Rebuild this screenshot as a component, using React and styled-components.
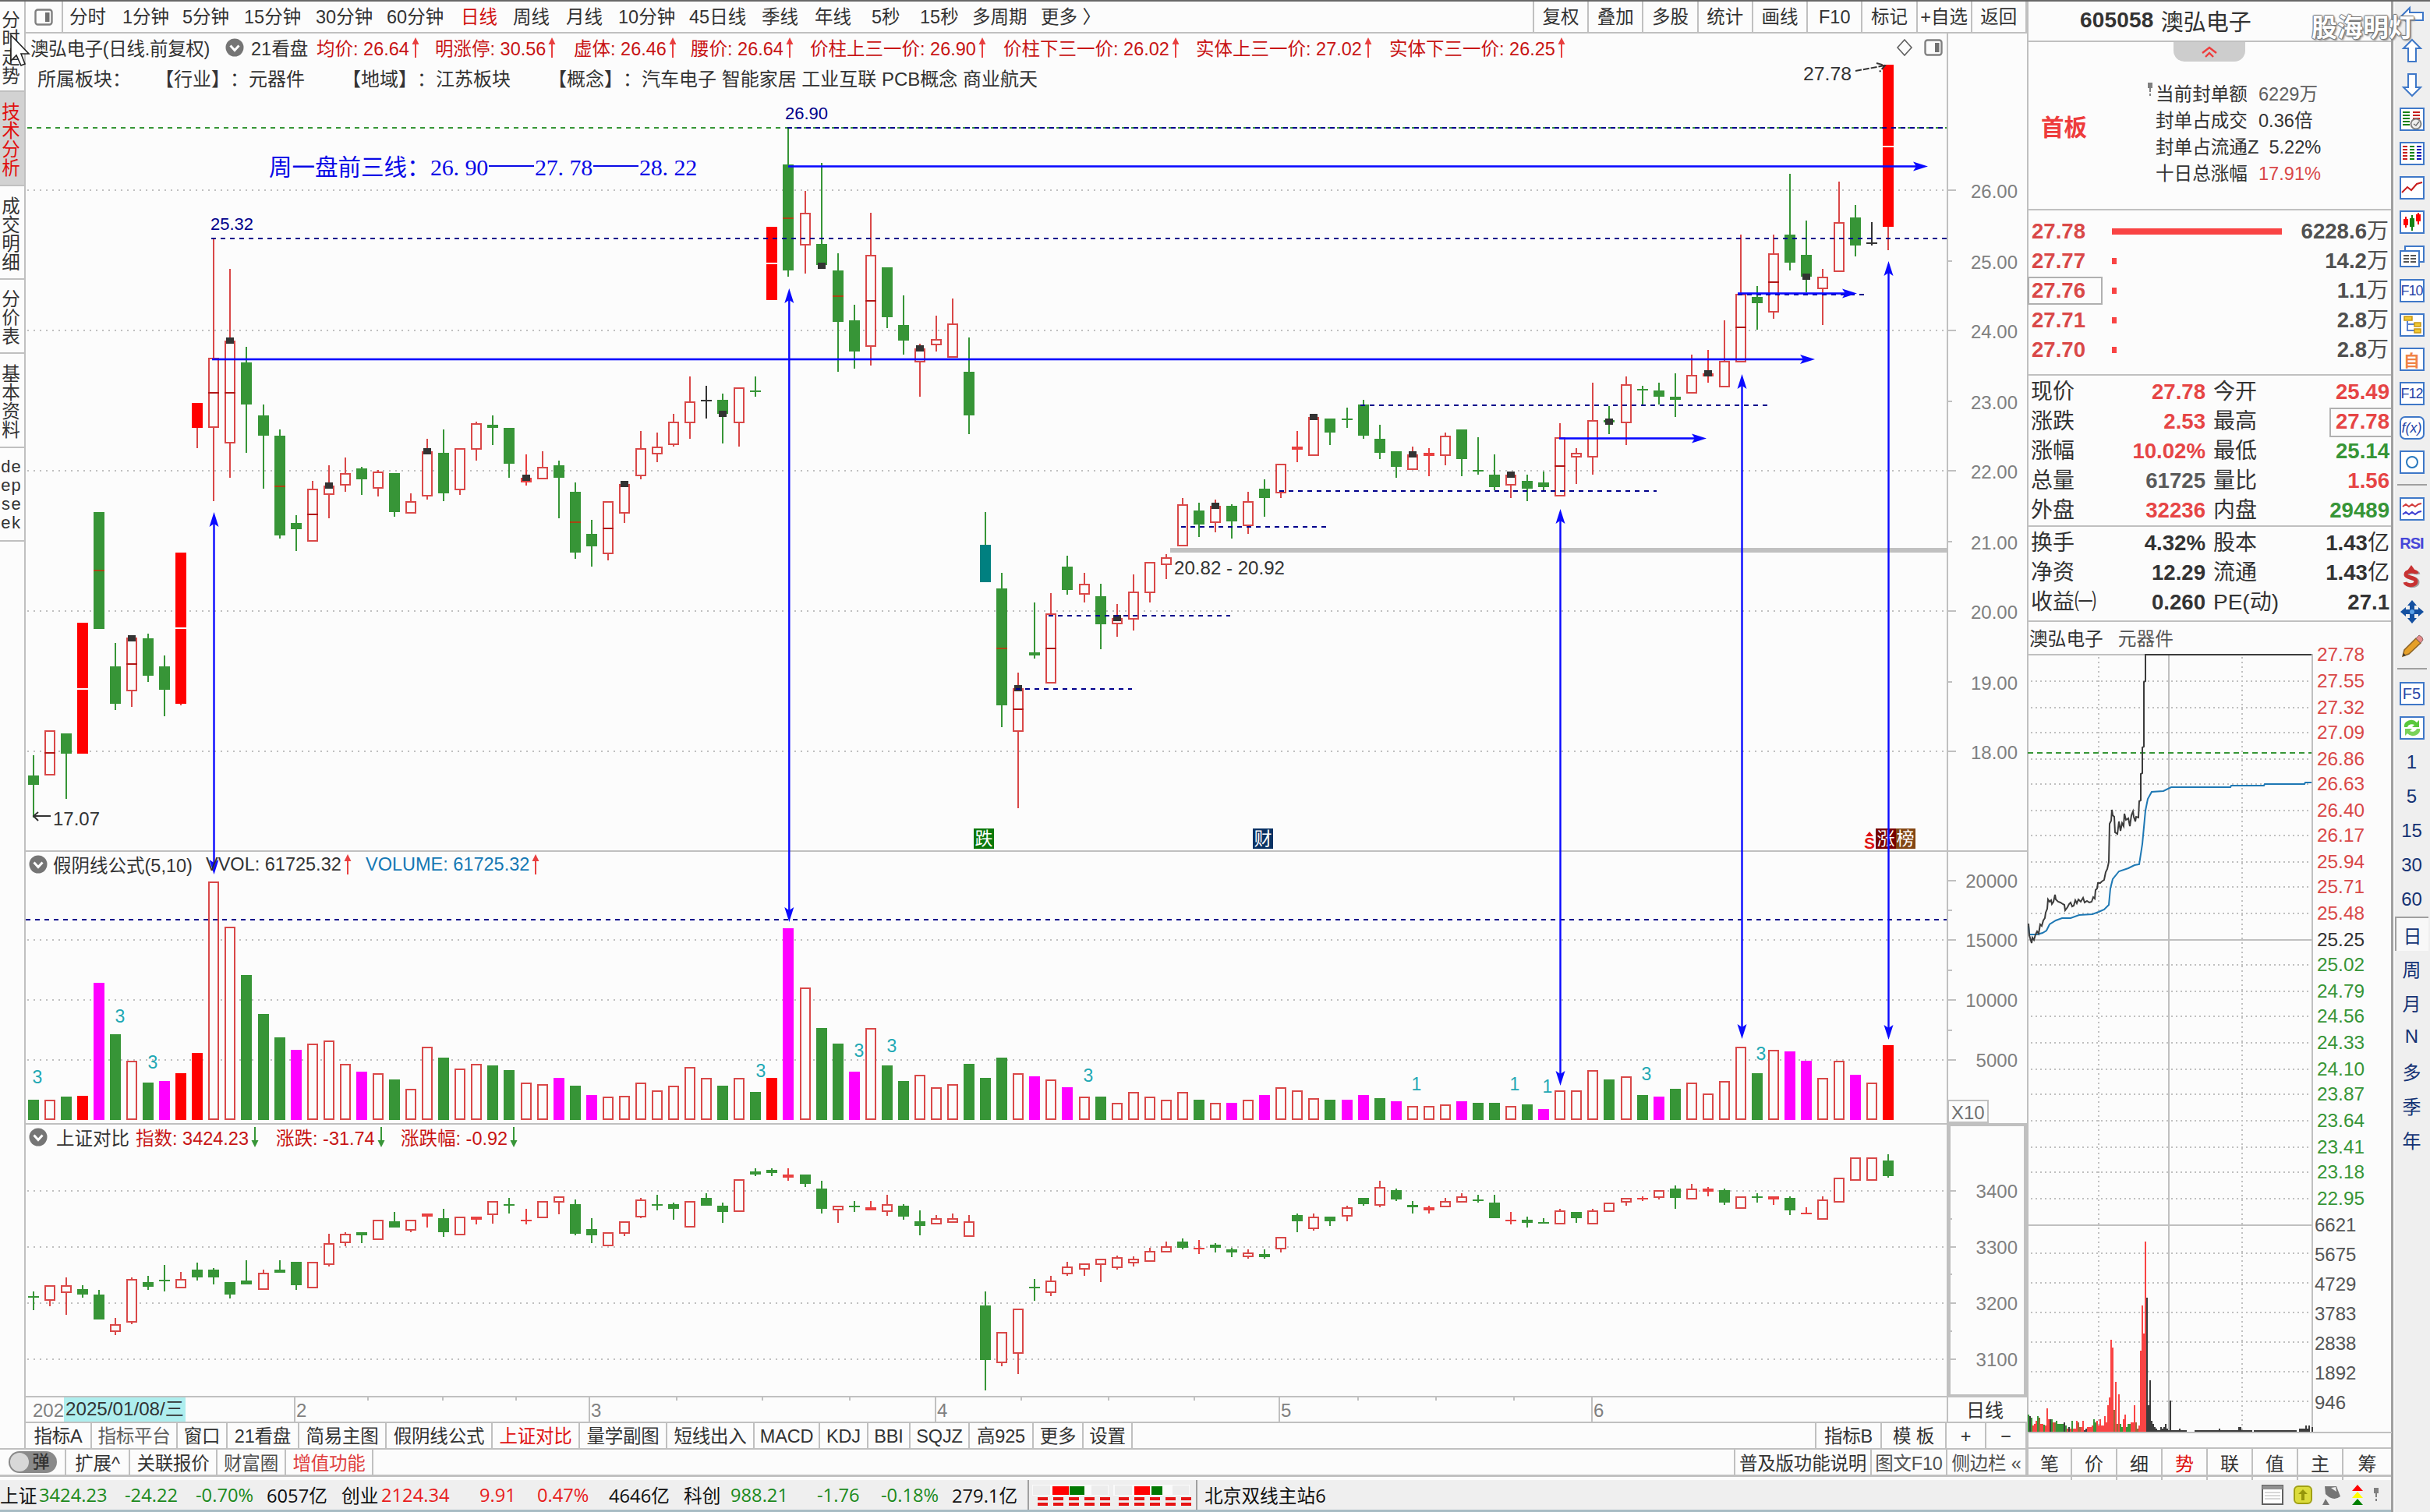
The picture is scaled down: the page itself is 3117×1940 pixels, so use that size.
import React from 'react'

import styled, { createGlobalStyle, css } from 'styled-components'

const INK = `#333333`
const LINE = `#c0c0c0`
const PAPER = `#fcfcfc`
const RED = `#d94848`
const DEEP_RED = `#c81414`
const GREEN = `#379537`
const NAVY = `#00008b`
const BLUE = `#0a0aff`
const FONT = `"Liberation Sans", "Noto Sans CJK SC", sans-serif`

const GlobalStyle = createGlobalStyle`
  * {
    box-sizing: border-box;
  }
  body {
    margin: 0;
    background: ${PAPER};
    color: ${INK};
    font-family: ${FONT};
    font-size: 24px;
    text-spacing-trim: space-all;
  }
`

/* ---------- data ---------- */

const periods = [
  [`分时`, 68],
  [`1分钟`, 77],
  [`5分钟`, 79],
  [`15分钟`, 92],
  [`30分钟`, 91],
  [`60分钟`, 95],
  [`日线`, 67],
  [`周线`, 68],
  [`月线`, 67],
  [`10分钟`, 91],
  [`45日线`, 93],
  [`季线`, 68],
  [`年线`, 73],
  [`5秒`, 62],
  [`15秒`, 67],
  [`多周期`, 88],
  [`更多 〉`, 80],
]

const actions = [`复权`, `叠加`, `多股`, `统计`, `画线`, `F10`, `标记`, `+自选`, `返回`]

const averages = [
  [`均价: 26.64`, 152],
  [`明涨停: 30.56`, 178],
  [`虚体: 26.46`, 150],
  [`腰价: 26.64`, 153],
  [`价柱上三一价: 26.90`, 248],
  [`价柱下三一价: 26.02`, 247],
  [`实体上三一价: 27.02`, 248],
  [`实体下三一价: 26.25`, 240],
]

// kind, high, top, bottom, low, marker top, half line
// r hollow red, R solid red, f thin red, g green, k doji, t teal
const days = [
  [`g`, 969, 995, 1007, 1049],
  [`r`, 937, 937, 995, 995, 0, 966],
  [`g`, 941, 941, 967, 1025],
  [`R`, 799, 799, 967, 967, 0, 884],
  [`g`, 657, 657, 807, 807, 0, 732],
  [`g`, 825, 855, 903, 911],
  [`r`, 815, 818, 887, 907, 815, 852],
  [`g`, 813, 819, 867, 875],
  [`g`, 841, 855, 885, 919],
  [`R`, 709, 709, 903, 905, 0, 806],
  [`R`, 517, 517, 549, 575],
  [`r`, 306, 459, 549, 643, 0, 504],
  [`r`, 345, 437, 569, 613, 433, 504],
  [`g`, 445, 465, 519, 581],
  [`g`, 519, 533, 559, 627],
  [`g`, 551, 559, 687, 691, 0, 624],
  [`g`, 661, 671, 679, 707],
  [`r`, 617, 627, 695, 695, 0, 660],
  [`r`, 597, 623, 635, 665, 619],
  [`r`, 587, 607, 623, 631],
  [`g`, 599, 601, 615, 635],
  [`r`, 603, 605, 627, 637],
  [`g`, 607, 607, 657, 663],
  [`r`, 633, 643, 659, 659],
  [`r`, 563, 579, 637, 641, 575],
  [`g`, 551, 581, 633, 643],
  [`r`, 575, 575, 629, 635],
  [`r`, 541, 543, 577, 591],
  [`g`, 533, 545, 549, 571],
  [`g`, 549, 549, 595, 613],
  [`f`, 583, 613, 619, 623, 609],
  [`r`, 579, 599, 615, 615],
  [`g`, 591, 597, 613, 665],
  [`g`, 619, 631, 709, 717, 0, 670],
  [`g`, 667, 685, 701, 727],
  [`r`, 643, 643, 711, 719, 0, 678],
  [`r`, 621, 621, 659, 671, 617],
  [`r`, 553, 575, 611, 615],
  [`r`, 555, 573, 583, 593],
  [`r`, 531, 541, 571, 573],
  [`r`, 483, 515, 543, 563],
  [`k`, 495, 513, 515, 537],
  [`g`, 505, 513, 531, 569, 527],
  [`r`, 497, 497, 543, 573],
  [`g`, 483, 501, 503, 509],
  [`R`, 291, 291, 385, 385, 0, 338],
  [`g`, 164, 211, 347, 355, 0, 280],
  [`r`, 245, 273, 315, 351],
  [`g`, 209, 313, 340, 345, 337],
  [`g`, 325, 347, 413, 477, 0, 380],
  [`g`, 391, 411, 451, 473],
  [`r`, 273, 327, 445, 469, 0, 386],
  [`g`, 343, 343, 407, 421],
  [`g`, 379, 417, 437, 455],
  [`r`, 441, 447, 465, 509, 443],
  [`r`, 405, 435, 443, 451],
  [`r`, 383, 415, 459, 459],
  [`g`, 433, 477, 533, 557],
  [`t`, 657, 699, 747, 747],
  [`g`, 735, 755, 905, 933, 0, 832],
  [`r`, 863, 883, 939, 1037, 879, 910],
  [`g`, 773, 837, 841, 845],
  [`r`, 761, 787, 877, 877, 0, 832],
  [`g`, 713, 727, 757, 763],
  [`r`, 735, 749, 763, 773],
  [`g`, 749, 765, 801, 833],
  [`r`, 775, 793, 801, 817, 789],
  [`r`, 737, 759, 795, 809],
  [`r`, 721, 721, 761, 773],
  [`r`, 711, 715, 725, 743],
  [`r`, 639, 647, 701, 701],
  [`g`, 645, 655, 673, 689],
  [`r`, 641, 649, 671, 683, 645],
  [`g`, 647, 649, 669, 691],
  [`r`, 631, 643, 675, 685],
  [`g`, 615, 627, 639, 663],
  [`r`, 595, 595, 633, 639],
  [`f`, 553, 573, 577, 593],
  [`r`, 533, 535, 585, 585, 531],
  [`g`, 537, 537, 555, 571],
  [`g`, 523, 537, 539, 549],
  [`g`, 513, 519, 559, 563],
  [`g`, 545, 563, 581, 589],
  [`g`, 579, 579, 599, 613],
  [`r`, 573, 583, 603, 603, 579],
  [`f`, 575, 581, 585, 611],
  [`r`, 555, 559, 585, 597],
  [`g`, 551, 551, 589, 611],
  [`g`, 561, 603, 605, 609],
  [`g`, 583, 609, 625, 629],
  [`r`, 605, 609, 623, 639, 605],
  [`g`, 609, 617, 627, 643],
  [`g`, 605, 619, 625, 629],
  [`r`, 543, 561, 637, 637, 0, 598],
  [`r`, 575, 581, 587, 621],
  [`r`, 491, 539, 587, 609],
  [`g`, 521, 539, 542, 557, 537],
  [`r`, 483, 493, 543, 571],
  [`g`, 495, 499, 501, 519],
  [`g`, 491, 501, 509, 519],
  [`g`, 479, 509, 513, 535],
  [`r`, 455, 481, 505, 505],
  [`f`, 449, 479, 483, 491, 475],
  [`r`, 411, 463, 497, 497],
  [`r`, 301, 377, 465, 465, 0, 420],
  [`g`, 367, 381, 389, 423],
  [`r`, 301, 325, 401, 409, 0, 362],
  [`g`, 223, 301, 337, 347],
  [`g`, 283, 327, 355, 375, 351],
  [`r`, 345, 355, 371, 417],
  [`r`, 233, 285, 349, 349],
  [`g`, 263, 279, 315, 329],
  [`k`, 285, 311, 313, 315],
  [`R`, 83, 83, 291, 321, 0, 188],
]

// top edge of every volume column
const volumes = `g1411 r1411 g1407 R1406 m1261 g1327 r1361 g1389 m1387 R1377 R1351 r1131 r1189 g1251 g1301 g1331 m1347 r1339 r1335 r1365
m1375 r1377 g1385 r1397 r1343 g1357 r1371 r1365 g1367 g1373 r1389 r1391 m1383 g1393 m1405 r1407 r1406 r1389 r1399 r1393
r1369 r1383 g1393 r1383 g1401 R1383 m1191 r1267 g1319 g1339 m1375 r1319 g1367 g1387 r1379 r1395 r1391 g1365 g1383 g1357
r1377 m1381 r1385 m1395 r1407 g1407 r1415 r1401 r1407 r1411 r1401 g1411 r1415 m1415 r1411 m1405 r1395 r1399 r1409 g1411
m1411 m1405 g1409 m1413 r1419 r1419 r1417 m1413 g1415 g1415 r1419 g1417 m1423 r1399 r1399 r1373 g1385 r1381 g1405 m1407
g1397 r1389 r1403 r1387 r1343 g1377 r1347 m1349 m1361 r1383 r1361 m1379 r1389 R1341`
  .split(/\s+/)
  .map(v => [v[0], Number(v.slice(1))])

const indexDays = [
  [`g`, 1657, 1663, 1665, 1681],
  [`r`, 1649, 1649, 1669, 1676],
  [`r`, 1639, 1649, 1659, 1687],
  [`g`, 1649, 1654, 1661, 1665],
  [`g`, 1655, 1661, 1693, 1693],
  [`r`, 1691, 1699, 1709, 1713],
  [`r`, 1639, 1641, 1697, 1699],
  [`g`, 1637, 1645, 1651, 1655],
  [`g`, 1623, 1642, 1644, 1657],
  [`r`, 1632, 1641, 1653, 1653],
  [`g`, 1620, 1629, 1639, 1643],
  [`g`, 1627, 1629, 1639, 1648],
  [`g`, 1645, 1645, 1661, 1666],
  [`g`, 1617, 1643, 1648, 1648],
  [`r`, 1629, 1633, 1655, 1655],
  [`g`, 1617, 1629, 1633, 1633],
  [`g`, 1619, 1619, 1649, 1655],
  [`r`, 1619, 1619, 1653, 1653],
  [`r`, 1583, 1595, 1623, 1625],
  [`r`, 1581, 1583, 1595, 1599],
  [`g`, 1581, 1581, 1585, 1595],
  [`r`, 1565, 1565, 1591, 1591],
  [`g`, 1555, 1567, 1575, 1575],
  [`r`, 1565, 1565, 1579, 1581],
  [`f`, 1557, 1557, 1561, 1575],
  [`g`, 1551, 1563, 1581, 1587],
  [`r`, 1561, 1561, 1585, 1585],
  [`f`, 1561, 1561, 1565, 1571],
  [`r`, 1541, 1541, 1559, 1570],
  [`g`, 1537, 1545, 1547, 1557],
  [`f`, 1551, 1565, 1567, 1571],
  [`r`, 1541, 1541, 1563, 1563],
  [`r`, 1535, 1535, 1543, 1558],
  [`g`, 1539, 1545, 1583, 1585],
  [`g`, 1563, 1577, 1585, 1595],
  [`r`, 1581, 1581, 1599, 1599],
  [`r`, 1567, 1567, 1583, 1586],
  [`r`, 1537, 1539, 1562, 1563],
  [`g`, 1533, 1545, 1547, 1553],
  [`g`, 1543, 1545, 1551, 1565],
  [`r`, 1541, 1541, 1575, 1575],
  [`g`, 1531, 1537, 1547, 1547],
  [`g`, 1543, 1547, 1555, 1569],
  [`r`, 1513, 1513, 1555, 1555],
  [`g`, 1499, 1503, 1507, 1509],
  [`g`, 1499, 1501, 1505, 1509],
  [`f`, 1499, 1507, 1511, 1515],
  [`g`, 1507, 1507, 1519, 1523],
  [`g`, 1515, 1525, 1551, 1557],
  [`r`, 1547, 1547, 1553, 1569],
  [`g`, 1541, 1547, 1549, 1555],
  [`f`, 1541, 1549, 1553, 1553],
  [`r`, 1533, 1545, 1555, 1560],
  [`g`, 1545, 1547, 1561, 1565],
  [`g`, 1553, 1567, 1573, 1585],
  [`r`, 1559, 1563, 1571, 1571],
  [`r`, 1557, 1563, 1569, 1569],
  [`r`, 1559, 1567, 1587, 1587],
  [`g`, 1657, 1675, 1745, 1784],
  [`r`, 1709, 1709, 1749, 1753],
  [`r`, 1679, 1679, 1737, 1763],
  [`g`, 1641, 1651, 1653, 1669],
  [`r`, 1637, 1643, 1659, 1663],
  [`r`, 1619, 1625, 1635, 1637],
  [`r`, 1621, 1621, 1629, 1637],
  [`r`, 1615, 1615, 1623, 1645],
  [`r`, 1611, 1613, 1627, 1629],
  [`r`, 1612, 1615, 1621, 1625],
  [`r`, 1601, 1605, 1619, 1619],
  [`r`, 1593, 1599, 1607, 1607],
  [`g`, 1589, 1593, 1601, 1603],
  [`f`, 1591, 1601, 1603, 1609],
  [`g`, 1595, 1597, 1601, 1607],
  [`g`, 1601, 1603, 1607, 1613],
  [`r`, 1603, 1607, 1613, 1615],
  [`g`, 1603, 1609, 1613, 1615],
  [`r`, 1587, 1587, 1603, 1607],
  [`g`, 1557, 1559, 1567, 1581],
  [`r`, 1557, 1561, 1577, 1579],
  [`g`, 1561, 1561, 1567, 1573],
  [`r`, 1547, 1549, 1561, 1567],
  [`g`, 1537, 1537, 1545, 1547],
  [`r`, 1515, 1523, 1547, 1549],
  [`g`, 1525, 1527, 1539, 1541],
  [`g`, 1541, 1546, 1549, 1557],
  [`f`, 1547, 1549, 1553, 1557],
  [`r`, 1537, 1541, 1549, 1549],
  [`r`, 1531, 1535, 1543, 1543],
  [`g`, 1533, 1539, 1541, 1543],
  [`g`, 1533, 1543, 1563, 1563],
  [`f`, 1555, 1565, 1567, 1571],
  [`g`, 1561, 1565, 1569, 1575],
  [`g`, 1563, 1568, 1570, 1570],
  [`r`, 1551, 1553, 1571, 1571],
  [`g`, 1555, 1555, 1563, 1569],
  [`r`, 1551, 1553, 1571, 1571],
  [`r`, 1543, 1543, 1555, 1555],
  [`r`, 1537, 1537, 1543, 1547],
  [`f`, 1535, 1537, 1539, 1541],
  [`r`, 1527, 1527, 1537, 1539],
  [`g`, 1521, 1525, 1537, 1551],
  [`r`, 1519, 1525, 1539, 1539],
  [`f`, 1523, 1525, 1529, 1535],
  [`g`, 1525, 1527, 1543, 1546],
  [`r`, 1535, 1535, 1551, 1551],
  [`g`, 1531, 1535, 1537, 1543],
  [`f`, 1535, 1535, 1539, 1546],
  [`g`, 1535, 1537, 1553, 1559],
  [`f`, 1549, 1556, 1558, 1558],
  [`r`, 1535, 1539, 1565, 1565],
  [`r`, 1511, 1511, 1543, 1543],
  [`r`, 1485, 1485, 1515, 1515],
  [`r`, 1485, 1485, 1515, 1515],
  [`g`, 1481, 1489, 1509, 1511],
]

const volumeNotes = [
  [48, 1382, 3],
  [154, 1304, 3],
  [196, 1363, 3],
  [976, 1374, 3],
  [1102, 1348, 3],
  [1144, 1342, 3],
  [1396, 1380, 3],
  [1817, 1391, 1],
  [1943, 1391, 1],
  [1985, 1394, 1],
  [2112, 1378, 3],
  [2259, 1352, 3],
]

const indicatorTabs = [
  [`指标A`, 85],
  [`指标平台`, 110],
  [`窗口`, 64],
  [`21看盘`, 92],
  [`简易主图`, 112],
  [`假阴线公式`, 136],
  [`上证对比`, 112],
  [`量学副图`, 112],
  [`短线出入`, 112],
  [`MACD`, 84],
  [`KDJ`, 62],
  [`BBI`, 54],
  [`SQJZ`, 76],
  [`高925`, 82],
  [`更多`, 64],
  [`设置`, 63],
]

const quotes = [
  [`现价`, `27.78`, `up`, `今开`, `25.49`, `up`],
  [`涨跌`, `2.53`, `up`, `最高`, `27.78`, `up`, true],
  [`涨幅`, `10.02%`, `up`, `最低`, `25.14`, `down`],
  [`总量`, `61725`, `soft`, `量比`, `1.56`, `up`],
  [`外盘`, `32236`, `up`, `内盘`, `29489`, `down`],
]

const facts = [
  [`换手`, `4.32%`, ``, `股本`, `1.43`, ``, false, `亿`],
  [`净资`, `12.29`, ``, `流通`, `1.43`, ``, false, `亿`],
  [`收益㈠`, `0.260`, ``, `PE(动)`, `27.1`, ``],
]

const ticksPrice = [27.78, 27.55, 27.32, 27.09, 26.86, 26.63, 26.4, 26.17, 25.94, 25.71, 25.48, 25.25, 25.02, 24.79, 24.56, 24.33, 24.1, 23.87, 23.64, 23.41, 23.18, 22.95]
const ticksPriceY = [840, 874, 908, 940, 974, 1006, 1040, 1072, 1106, 1138, 1172, 1206, 1238, 1272, 1304, 1338, 1372, 1404, 1438, 1472, 1504, 1538]
const ticksVolume = [6621, 5675, 4729, 3783, 2838, 1892, 946]
const ticksVolumeY = [1570, 1608, 1646, 1684, 1722, 1760, 1798]

const minuteVolumes = `g1815 k1817 g1819 r1829 r1827 r1823 g1817 b1819 r1827 r1827 g1828 r1829 r1807 r1821 k1821 g1821 r1825 b1825 g1823 g1827
g1827 g1827 g1827 k1825 g1829 r1833 k1831 r1833 g1823 r1833 r1833 r1823 b1825 b1831 r1831 r1823 k1835 k1833 r1831 r1831
r1831 r1829 g1821 g1825 r1823 r1829 r1821 r1829 r1829 r1817 r1825 r1803 r1793 r1719 r1729 b1809 r1773 b1827 r1789 g1827
g1831 r1821 r1815 g1831 g1827 g1827 r1825 r1825 r1803 b1825 b1833 r1829 r1733 r1675 r1711 r1593 k1665 k1803 k1771 k1823
k1827 k1831 k1833 k1835 k1835 k1831 k1833 k1831 k1827 k1833 k1835 k1797`
  .split(/\s+/)
  .map(v => [v[0], Number(v.slice(1))])

const minuteColors = { r: `#f94444`, g: GREEN, k: `#3c3c3c`, b: `#9a6a3a` }

const indices = [
  [`上证`, 50, `ink`],
  [`3424.23`, 110, `down`],
  [`-24.22`, 91, `down`],
  [`-0.70%`, 91, `down`],
  [`6057亿`, 96, `ink`],
  [`创业`, 51, `ink`],
  [`2124.34`, 126, `up`],
  [`9.91`, 74, `up`],
  [`0.47%`, 92, `up`],
  [`4646亿`, 96, `ink`],
  [`科创`, 60, `ink`],
  [`988.21`, 111, `down`],
  [`-1.76`, 82, `down`],
  [`-0.18%`, 91, `down`],
  [`279.1亿`, 97, `ink`],
]

/* ---------- shell ---------- */

const Page = styled.div`
  display: flex;
  width: 3117px;
  height: 1940px;
  overflow: hidden;
  position: relative;
  background: ${PAPER};
  border-top: 2px solid #686868;
`

const Desk = styled.div`
  display: flex;
  flex-direction: column;
  width: 3070px;
  border-right: 3px solid #a0a0a0;
`

const Upper = styled.div`
  display: flex;
  height: 1893px;
`

const Workspace = styled.div`
  display: flex;
  flex-direction: column;
  width: 2600px;
`

const Studio = styled.div`
  display: flex;
  height: 1856px;
`

const Center = styled.div`
  display: flex;
  flex-direction: column;
  width: 2567px;
`

/* ---------- left tabs ---------- */

const SideTabs = styled.nav`
  display: flex;
  flex-direction: column;
  width: 33px;
  border-right: 2px solid ${LINE};
`

const SideTab = styled.div`
  display: flex;
  flex-direction: column;
  align-items: center;
  justify-content: center;
  height: ${p => p.$height}px;
  padding: 5px 3px 0 0;
  border-bottom: 2px solid ${LINE};
  font-family: ${p => (p.$mono ? `"Liberation Mono", monospace` : FONT)};
  font-size: ${p => (p.$mono ? 22 : 23.5)}px;
  line-height: 24px;
  ${p =>
    p.$active &&
    css`
      background: #d2d2d2;
      color: #e01010;
    `}
`

/* ---------- top bar ---------- */

const TopBar = styled.div`
  display: flex;
  align-items: stretch;
  height: 41px;
  border-bottom: 2px solid ${LINE};
  font-size: 23.5px;
  line-height: 41px;
  white-space: nowrap;
`

const PanelToggle = styled.div`
  display: flex;
  align-items: center;
  justify-content: center;
  width: 48px;
  margin-right: 8px;
  border-right: 2px solid ${LINE};
`

const Period = styled.span`
  width: ${p => p.$width}px;
  color: ${p => (p.$active ? `#d01010` : INK)};
`

const Actions = styled.div`
  display: flex;
  width: 634px;
  margin-left: auto;
  border-right: 2px solid ${LINE};
`

const Action = styled.span`
  flex: 1;
  border-left: 2px solid ${LINE};
  text-align: center;
`

/* ---------- chart ---------- */

const Board = styled.div`
  display: grid;
  grid-template-columns: 2567px;
  grid-template-rows: 1049px 350px 350px 32px;
  height: 1781px;
`

const Canvas = styled.svg`
  grid-area: 1 / 1 / 5 / 2;
  display: block;
  font-family: ${FONT};
`

const Legend = styled.div`
  grid-column: 1;
  grid-row: ${p => p.$row};
  display: flex;
  flex-direction: column;
  align-items: flex-start;
  z-index: 1;
  font-size: 23.5px;
  white-space: nowrap;
`

const LegendLine = styled.div`
  display: flex;
  align-items: center;
  height: ${p => p.$height}px;
  padding-left: ${p => p.$indent}px;
`

const StockName = styled.span`
  width: 250px;
  letter-spacing: -0.3px;
`

const Reading = styled.span`
  display: flex;
  align-items: center;
  width: ${p => p.$width}px;
  color: ${p => p.$color || DEEP_RED};
  gap: 3px;
`

const LegendTail = styled.div`
  display: flex;
  align-items: center;
  gap: 14px;
  margin-left: 410px;
`

const Sector = styled.span`
  width: ${p => p.$width}px;
  font-size: 24px;
`

const Caption = styled.span`
  display: flex;
  align-items: center;
  width: ${p => p.$width}px;
`

/* ---------- lower tabs ---------- */

const TabRow = styled.div`
  display: flex;
  height: ${p => p.$height}px;
  border-top: 2px solid ${LINE};
  font-size: 23.5px;
  line-height: ${p => p.$height}px;
  white-space: nowrap;
  ${p =>
    p.$closed &&
    css`
      border-bottom: 3px solid ${LINE};
    `}
`

const Tab = styled.div`
  width: ${p => p.$width}px;
  border-right: 2px solid ${LINE};
  text-align: center;
  letter-spacing: -0.2px;
  color: ${p => p.$color || INK};
`

const Spring = styled.div`
  flex: 1;
  border-right: 2px solid ${LINE};
`

const SwitchCell = styled.div`
  display: flex;
  align-items: center;
  justify-content: center;
  width: 85px;
  border-right: 2px solid ${LINE};
`

const Switch = styled.div`
  display: flex;
  align-items: center;
  gap: 5px;
  width: 62px;
  height: 28px;
  padding: 0 2px;
  border-radius: 14px;
  background: #8a8a8a;
  font-size: 22px;
  font-weight: 500;
  line-height: 28px;
`

const Knob = styled.i`
  width: 24px;
  height: 24px;
  border-radius: 50%;
  background: #d8d8d8;
`

/* ---------- quote panel ---------- */

const Quote = styled.aside`
  display: flex;
  flex-direction: column;
  width: 467px;
  border-left: 2px solid ${LINE};
`

const QuoteHead = styled.header`
  display: flex;
  align-items: center;
  gap: 9px;
  height: 52px;
  padding: 0 0 3px 66px;
  border-bottom: 2px solid ${LINE};
  font-size: 29px;
`

const Ticker = styled.b`
  font-size: 28px;
  letter-spacing: 0.2px;
`

const Seal = styled.section`
  display: grid;
  grid-template-columns: 153px 1fr;
  grid-template-rows: 25px 1fr;
  height: 216px;
  border-bottom: 2px solid ${LINE};
`

const Fold = styled.div`
  grid-column: 1 / 3;
  display: flex;
  align-items: center;
  justify-content: center;
  width: 92px;
  height: 25px;
  margin-left: 186px;
  border-radius: 0 0 14px 14px;
  background: #cdcdcd;
`

const Streak = styled.b`
  padding: 63px 0 0 16px;
  color: #ee3c3c;
  font-size: 29.5px;
  line-height: 44px;
`

const SealList = styled.dl`
  margin: 0;
  padding-top: 25px;
`

const SealLine = styled.div`
  display: flex;
  gap: ${p => p.$gap || 14}px;
  height: 34px;
  padding-left: ${p => (p.$pinned ? 0 : 10)}px;
  font-size: 23.6px;
  line-height: 34px;
  color: ${p => p.$color || INK};
`

const SealLabel = styled.dt`
  display: flex;
  gap: 4px;
  color: ${INK};
`

const SealValue = styled.dd`
  margin: 0;
`

const Orders = styled.section`
  height: 212px;
  padding-top: 8px;
  border-bottom: 2px solid ${LINE};
`

const Order = styled.div`
  display: grid;
  grid-template-columns: 95px 241px 1fr;
  align-items: center;
  height: 38px;
  padding-right: 3px;
`

const OrderPrice = styled.b`
  height: 36px;
  padding-left: 3px;
  border: 2px solid ${p => (p.$boxed ? `#b0b0b0` : `transparent`)};
  color: ${RED};
  font-size: 27.6px;
  line-height: 32px;
  margin-left: -1px;
`

const OrderBar = styled.i`
  height: 8px;
  margin-left: 12px;
  background: #f94444;
`

const OrderSize = styled.b`
  justify-self: end;
  color: #505050;
  font-size: 27.6px;
  line-height: 36px;
  white-space: nowrap;
`

const Wan = styled.span`
  font-weight: 400;
  font-size: 28px;
`

const Numbers = styled.section`
  height: ${p => p.$height}px;
  padding-top: 3px;
  border-bottom: 2px solid ${LINE};
`

const NumberRow = styled.div`
  display: grid;
  grid-template-columns: 106px 121px 114px 1fr;
  height: 38px;
  padding-left: 3px;
  font-size: 28px;
  line-height: 36px;
  white-space: nowrap;
`

const tones = { up: `#e64545`, down: GREEN, soft: `#5a5a5a` }

const NumberValue = styled.b`
  justify-self: end;
  padding: 0 ${p => (p.$last ? 2 : 3)}px 0 6px;
  border: 2px solid ${p => (p.$boxed ? `#b0b0b0` : `transparent`)};
  border-right: 0;
  color: ${p => tones[p.$tone] || INK};
  font-size: 27.6px;
  line-height: 32px;
`

const NumberLabel = styled.span`
  padding-left: ${p => (p.$second ? 7 : 0)}px;
`

const MiniTitle = styled.div`
  display: flex;
  gap: 19px;
  height: 41px;
  padding-left: 1px;
  font-size: 23.7px;
  line-height: 45px;
`

const Industry = styled.span`
  color: #555555;
`

const MiniCanvas = styled.svg`
  display: block;
  flex: none;
  overflow: visible;
  font-family: ${FONT};
`

const MiniTabs = styled.div`
  display: grid;
  grid-template-columns: 54px repeat(6, 58px) 1fr;
  height: 38px;
  border-top: 2px solid ${LINE};
  border-bottom: 3px solid ${LINE};
  line-height: 40px;
`

const MiniTab = styled.span`
  border-left: 2px solid ${LINE};
  text-align: center;
  color: ${p => (p.$active ? `#e01010` : INK)};
  &:first-child {
    border-left: 0;
  }
`

/* ---------- status bar ---------- */

const Status = styled.footer`
  display: flex;
  align-items: center;
  flex: 1;
  margin-top: 4px;
  background: #efefef;
  border-bottom: 3px solid #a8bcc4;
  color: #101010;
  font-family: "Open Sans", "Noto Sans CJK SC", sans-serif;
  font-size: 23.7px;
  white-space: nowrap;
`

const statusTones = { up: `#e81c1c`, down: `#1c8a1c`, ink: `#101010` }

const IndexCell = styled.span`
  width: ${p => p.$width}px;
  color: ${p => statusTones[p.$tone]};
`

const Lamps = styled.div`
  display: flex;
  align-items: center;
  width: 218px;
  height: 38px;
  margin-right: 9px;
  padding-left: 4px;
  border-left: 2px solid #a0a0a0;
  border-right: 2px solid #a0a0a0;
`

const Tray = styled.div`
  display: flex;
  align-items: center;
  gap: 13px;
  margin-left: auto;
  padding-right: 16px;
`

/* ---------- tool strip ---------- */

const Strip = styled.div`
  display: flex;
  flex-direction: column;
  width: 47px;
  margin-top: -3px;
  padding-right: 2px;
  background: #efefef;
  border-left: 2px solid #f8f8f8;
`

const Tool = styled.div`
  display: flex;
  align-items: center;
  justify-content: center;
  flex: none;
  height: 44px;
  color: #143274;
  font-size: ${p => p.$size || 24}px;
  ${p =>
    p.$pressed &&
    css`
      background: #f8f8f8;
      border-top: 2px solid #a0a0a0;
      border-left: 2px solid #a0a0a0;
    `}
`

const Frame = styled.div`
  display: flex;
  align-items: center;
  justify-content: center;
  width: 32px;
  height: 30px;
  border: 2px solid #3f78c8;
  background: #ffffff;
  border-radius: ${p => (p.$round ? 7 : 0)}px;
  color: ${p => p.$color || `#2846a8`};
  font-size: ${p => p.$size || 18}px;
  font-style: ${p => (p.$italic ? `italic` : `normal`)};
  font-weight: ${p => (p.$bold ? 700 : 400)};
  letter-spacing: ${p => (p.$tight ? -1 : 0)}px;
`

const Rule = styled.hr`
  flex: none;
  width: 38px;
  height: 2px;
  margin: ${p => p.$gap};
  border: 0;
  background: #a0a0a0;
`

const Rsi = styled.b`
  color: #4646d8;
  font-size: 20px;
  letter-spacing: -1px;
`

const Watermark = styled.div`
  position: absolute;
  top: 10px;
  left: 2965px;
  color: #ffffff;
  font-size: 33px;
  font-weight: 700;
  line-height: 48px;
  text-shadow: 1px 0 1px #707070, -1px 0 1px #707070, 0 1px 1px #707070,
    0 -1px 1px #707070, 2px 2px 2px #909090;
`

const Pointer = styled.svg`
  position: absolute;
  top: 42px;
  left: 13px;
`

/* ---------- drawings ---------- */

const xOf = i => Math.round(42.7 + i * 21.06)

const Label = ({ x, y, size = 24, width, children, ...rest }) => (
  <text
    x={x}
    y={y + size * 0.36}
    fontSize={size}
    textLength={width}
    lengthAdjust="spacingAndGlyphs"
    {...rest}
  >
    {children}
  </text>
)

const candleColors = { r: RED, R: `#ff0000`, f: `#e84040`, g: GREEN, k: INK, t: `#008080` }

const Candle = ({ i, day }) => {
  const [kind, high, top, bottom, low, mark, half] = day
  const x = xOf(i)
  const color = candleColors[kind]
  const wick = kind === `t` ? GREEN : kind === `R` ? RED : color
  return (
    <g shapeRendering="crispEdges">
      {low > high && <rect x={x - 1} y={high} width={2} height={low - high} fill={wick} />}
      {kind === `r` ? (
        <rect
          x={x - 6}
          y={top + 1}
          width={12}
          height={Math.max(2, bottom - top - 2)}
          fill={PAPER}
          stroke={color}
          strokeWidth={2}
        />
      ) : (
        <rect x={x - 7} y={top} width={14} height={Math.max(2, bottom - top)} fill={color} />
      )}
      {half > 0 && (
        <rect
          x={x - 7}
          y={half - 1}
          width={14}
          height={2}
          fill={kind === `R` ? PAPER : kind === `g` ? `#a84614` : `#b01818`}
        />
      )}
      {mark > 0 && <rect x={x - 5} y={mark} width={10} height={8} fill={INK} />}
    </g>
  )
}

const VolumeBar = ({ i, bar }) => {
  const [kind, top] = bar
  const x = xOf(i)
  if (kind === `r`) {
    return (
      <rect
        x={x - 6}
        y={top + 1}
        width={12}
        height={1435 - top}
        fill={PAPER}
        stroke={RED}
        strokeWidth={2}
        shapeRendering="crispEdges"
      />
    )
  }
  return (
    <rect
      x={x - 7}
      y={top}
      width={14}
      height={1437 - top}
      fill={kind === `m` ? `#ff00ff` : candleColors[kind]}
      shapeRendering="crispEdges"
    />
  )
}

const Dotted = ({ y, x1 = 35, x2 = 2496 }) => (
  <line x1={x1} x2={x2} y1={y} y2={y} stroke={LINE} strokeWidth={2} strokeDasharray="2 6" />
)

const Dashed = ({ y, x1, x2, color = NAVY }) => (
  <line x1={x1} x2={x2} y1={y} y2={y} stroke={color} strokeWidth={2} strokeDasharray="6 6" />
)

const Ray = ({ y, x1, x2 }) => (
  <g fill={BLUE}>
    <rect x={x1} y={y - 1.3} width={x2 - x1 - 10} height={2.6} />
    <path d={`M${x2} ${y} l-19 -6 l4 6 l-4 6 z`} />
  </g>
)

const Span = ({ x, y1, y2 }) => (
  <g fill={BLUE}>
    <rect x={x - 1.2} y={y1 + 8} width={2.4} height={y2 - y1 - 16} />
    <path d={`M${x} ${y1} l-6 19 l6 -4 l6 4 z`} />
    <path d={`M${x} ${y2} l-6 -19 l6 4 l6 -4 z`} />
  </g>
)

const Stamp = ({ x, fill, children }) => (
  <g>
    <rect x={x} y={1063} width={26} height={26} fill={fill} />
    <Label x={x + 13} y={1076} size={23} fill="#ffffff" textAnchor="middle">
      {children}
    </Label>
  </g>
)

// every figure sits in its own half-width cell
const Figures = ({ x, children }) => (
  <Label x={children.split(``).map((_, n) => x + n * 14.8).join(` `)} y={214} size={30}>
    {children}
  </Label>
)

const Trend = ({ down }) => (
  <svg width="10" height="26" viewBox="0 0 10 26" transform={down ? `rotate(180)` : undefined}>
    <path
      d="M5 0 L9.5 9 L6 9 L6 26 L4 26 L4 9 L0.5 9 Z"
      fill={down ? GREEN : `#e84040`}
    />
  </svg>
)

const Dropdown = () => (
  <svg width="24" height="24" viewBox="0 0 24 24">
    <circle cx="12" cy="12" r="11.5" fill="#757575" />
    <path d="M6.5 9.5 L12 15.5 L17.5 9.5" fill="none" stroke="#fff" strokeWidth="3" />
  </svg>
)

const SplitIcon = () => (
  <svg width="25" height="22" viewBox="0 0 25 22">
    <rect x="1.5" y="1.5" width="21" height="19" rx="3" fill="none" stroke="#808080" strokeWidth="2.4" />
    <rect x="14" y="5" width="5.5" height="12" fill="#707070" />
  </svg>
)

const Pin = () => (
  <svg width="6" height="22" viewBox="0 0 6 22">
    <rect x="0" y="2" width="6" height="7" fill="#808080" />
    <path d="M3 9 V14 M3 16 V19" stroke="#808080" strokeWidth="2" />
  </svg>
)

const priceAxis = [
  [26, 244],
  [25, 335],
  [24, 424],
  [23, 515],
  [22, 604],
  [21, 695],
  [20, 784],
  [19, 875],
  [18, 964],
]

const months = [
  [378, `2`],
  [756, `3`],
  [1200, `4`],
  [1641, `5`],
  [2042, `6`],
]
const weeks = [472, 568, 662, 868, 978, 1090, 1310, 1422, 1532, 1742, 1842, 1942]

const Chart = () => (
  <Canvas width="2567" height="1781" viewBox="33 43 2567 1781">
    {[244, 424, 604, 784, 964, 1206, 1283, 1360, 1528, 1600, 1672, 1744].map(y => (
      <Dotted key={y} y={y} />
    ))}

    {/* frame */}
    <g fill={LINE} shapeRendering="crispEdges">
      <rect x={2497} y={43} width={2} height={1781} />
      <rect x={33} y={1091} width={2567} height={2} />
      <rect x={33} y={1441} width={2567} height={2} />
      <rect x={33} y={1791} width={2567} height={2} />
      <rect x={2498} y={1441} width={4} height={352} />
      <rect x={2596} y={1441} width={4} height={352} />
      <rect x={2498} y={1441} width={102} height={4} />
      <rect x={2498} y={1789} width={102} height={4} />
      {priceAxis.map(([v, y]) => (
        <rect key={v} x={2499} y={y - 1} width={v % 2 ? 5 : 10} height={2} />
      ))}
      {[1130, 1206, 1283, 1360, 1528, 1600, 1672, 1744].map(y => (
        <rect key={y} x={2499} y={y - 1} width={10} height={2} />
      ))}
      {[1168, 1245, 1322, 1564, 1635, 1708].map(y => (
        <rect key={y} x={2499} y={y - 1} width={5} height={2} />
      ))}
      {months.map(([x]) => (
        <rect key={x} x={x - 1} y={1792} width={2} height={32} />
      ))}
      {weeks.map(x => (
        <rect key={x} x={x - 1} y={1792} width={2} height={5} />
      ))}
    </g>

    <Dashed y={164} x1={35} x2={2497} color={GREEN} />
    <rect x={1501} y={703} width={996} height={6} fill={LINE} />

    {days.map((day, i) => (
      <Candle key={i} i={i} day={day} />
    ))}
    {volumes.map((bar, i) => (
      <VolumeBar key={i} i={i} bar={bar} />
    ))}
    {indexDays.map((day, i) => (
      <Candle key={i} i={i} day={day} />
    ))}

    <Dashed y={164} x1={1010} x2={2497} />
    <Dashed y={306} x1={271} x2={2497} />
    <Dashed y={1180} x1={33} x2={2497} />
    <Dashed y={520} x1={1745} x2={2268} />
    <Dashed y={378} x1={2229} x2={2394} />
    <Dashed y={630} x1={1641} x2={2125} />
    <Dashed y={676} x1={1515} x2={1702} />
    <Dashed y={790} x1={1345} x2={1578} />
    <Dashed y={884} x1={1303} x2={1452} />

    <Ray y={213.5} x1={1011} x2={2473} />
    <Ray y={461} x1={272} x2={2328} />
    <Ray y={376.5} x1={2229} x2={2382} />
    <Ray y={562.5} x1={2000} x2={2189} />

    <Stamp x={1249} fill="#0a780a">
      跌
    </Stamp>
    <Stamp x={1607} fill="#0a3264">
      财
    </Stamp>
    <Stamp x={2431} fill="#824614">
      榜
    </Stamp>
    <Stamp x={2406} fill="#780000">
      涨
    </Stamp>
    <path d="M2398 1067 l5 6 h-10 z" fill="#e01414" />
    <Label x={2398} y={1081} size={21} fill="#e01414" fontWeight="700" textAnchor="middle">
      S
    </Label>

    <Span x={274.5} y1={657} y2={1122} />
    <Span x={1012.3} y1={370} y2={1183} />
    <Span x={2001.5} y1={653} y2={1393} />
    <Span x={2234.5} y1={480} y2={1333} />
    <Span x={2422.5} y1={335} y2={1334} />

    <Label x={270} y={287} size={22.5} width={55} fill={NAVY}>
      25.32
    </Label>
    <Label x={1007} y={145} size={22.5} width={55} fill={NAVY}>
      26.90
    </Label>
    <Label x={2313} y={94} width={62} fill={INK}>
      27.78
    </Label>
    <path
      d="M2380 91 L2418 84 M2407 81 L2418 84 L2411 92"
      fill="none"
      stroke={INK}
      strokeWidth="2"
      strokeDasharray="8 2"
    />
    <Label x={68} y={1050} width={60} fill={INK}>
      17.07
    </Label>
    <path d="M65 1047 H44 M49 1042 L43 1047 L49 1053" fill="none" stroke={INK} strokeWidth="2" />
    <Label x={1506} y={728} width={142} fill={INK}>
      20.82 - 20.92
    </Label>

    <g fill="#0a0ae6" fontFamily={`"Liberation Serif", "Noto Sans CJK SC", serif`}>
      <Label x={345} y={214} size={29.5}>
        周一盘前三线：
      </Label>
      <Figures x={552}>26.90</Figures>
      <Figures x={686}>27.78</Figures>
      <Figures x={820}>28.22</Figures>
      <rect x={627} y={212} width={58} height={2} />
      <rect x={761} y={212} width={58} height={2} />
    </g>

    <g fill="#22a8b4" textAnchor="middle">
      {volumeNotes.map(([x, y, n]) => (
        <Label key={x} x={x} y={y} size={23}>
          {n}
        </Label>
      ))}
    </g>

    <g fill="#808080" textAnchor="end">
      {priceAxis.map(([v, y]) => (
        <Label key={v} x={2588} y={y + 1}>
          {v.toFixed(2)}
        </Label>
      ))}
      {[
        [20000, 1130],
        [15000, 1206],
        [10000, 1283],
        [5000, 1360],
        [3400, 1528],
        [3300, 1600],
        [3200, 1672],
        [3100, 1744],
      ].map(([v, y]) => (
        <Label key={v} x={2588} y={y}>
          {v}
        </Label>
      ))}
    </g>
    <rect x={2499} y={1412} width={51} height={28} fill="none" stroke={LINE} strokeWidth="2" />
    <Label x={2503} y={1427} fill="#707070">
      X10
    </Label>

    <g fill="#808080">
      <Label x={42} y={1809}>
        202
      </Label>
      {months.map(([x, m]) => (
        <Label key={m} x={x + 2} y={1809}>
          {m}
        </Label>
      ))}
    </g>
    <rect x={82} y={1793} width={156} height={31} fill="#aeeeee" />
    <Label x={84} y={1807} width={152} fill={INK}>
      2025/01/08/三
    </Label>
    <Label x={2522} y={1809} fill={INK}>
      日线
    </Label>
  </Canvas>
)

const pricePath = `2602,1185 2603,1200 2606,1210 2607,1203 2609,1206 2611,1199 2613,1195 2615,1198 2617,1186 2619,1188 2621,1181 2623,1178 2624,1171 2626,1166 2627,1154 2629,1157 2631,1155 2632,1160 2634,1157 2636,1148 2637,1154 2640,1157 2643,1158 2646,1160 2648,1161 2649,1168 2652,1164 2654,1160 2656,1158 2658,1163 2660,1162 2662,1155 2664,1159 2666,1154 2669,1157 2672,1152 2674,1158 2677,1156 2680,1158 2683,1157 2685,1151 2687,1153 2688,1142 2690,1140 2691,1133 2694,1133 2696,1131 2699,1129 2701,1119 2703,1115 2705,1106 2706,1057 2708,1053 2709,1039 2710,1046 2712,1048 2713,1068 2716,1070 2718,1054 2720,1066 2722,1056 2724,1060 2725,1044 2727,1052 2730,1050 2732,1060 2734,1046 2736,1041 2737,1048 2739,1054 2740,1048 2743,1049 2744,1028 2746,1027 2746,993 2748,992 2748,959 2750,958 2750,875 2752,874 2752,840 2965,840`
const averagePath = `2602,1188 2603,1199 2613,1199 2620,1197 2625,1194 2629,1186 2637,1181 2645,1178 2656,1178 2667,1174 2684,1173 2692,1170 2699,1167 2705,1161 2707,1140 2710,1128 2718,1118 2730,1114 2738,1110 2744,1109 2748,1083 2752,1040 2755,1025 2760,1016 2775,1015 2785,1010 2861,1010 2862,1008 2904,1008 2905,1006 2956,1006 2957,1004 2965,1004`

const MiniChart = () => (
  <MiniCanvas width="466" height="1018" viewBox="2602 839 466 1018">
    <g stroke={LINE} strokeWidth="2" strokeDasharray="2 4">
      {ticksPriceY.concat(ticksVolumeY.slice(1)).map(y => (
        <line key={y} x1={2605} x2={2964} y1={y} y2={y} />
      ))}
      <line x1={2692} x2={2692} y1={843} y2={1836} />
      <line x1={2876} x2={2876} y1={843} y2={1836} />
    </g>
    <g fill={LINE} shapeRendering="crispEdges">
      <rect x={2601} y={839} width={365} height={2} />
      <rect x={2965} y={839} width={2} height={1000} />
      <rect x={2781} y={839} width={2} height={1000} />
      <rect x={2601} y={1205} width={365} height={2} />
      <rect x={2601} y={1571} width={365} height={2} />
      <rect x={2601} y={1837} width={467} height={2} />
    </g>
    <line x1={2601} x2={2965} y1={966} y2={966} stroke={GREEN} strokeWidth="2" strokeDasharray="7 5" />
    <g shapeRendering="crispEdges">
      {minuteVolumes.map(([kind, top], i) => (
        <rect
          key={i}
          x={2601 + Math.round(i * 2.003)}
          y={top}
          width={2}
          height={1837 - top}
          fill={minuteColors[kind]}
        />
      ))}
      <g fill="#3c3c3c">
        <rect x={2784} y={1835} width={21} height={2} />
        <rect x={2815} y={1835} width={74} height={2} />
        <rect x={2891} y={1835} width={55} height={2} />
        <rect x={2949} y={1833} width={14} height={4} />
        <rect x={2871} y={1831} width={4} height={6} />
        <rect x={2795} y={1833} width={2} height={3} />
        <rect x={2846} y={1833} width={2} height={3} />
        <rect x={2957} y={1829} width={2} height={8} />
        <rect x={2961} y={1829} width={2} height={8} />
        <rect x={2965} y={1831} width={2} height={6} />
      </g>
    </g>
    <polyline points={averagePath} fill="none" stroke="#1e78b4" strokeWidth="2" />
    <polyline points={pricePath} fill="none" stroke="#3c3c3c" strokeWidth="2" />
    {ticksPrice.map((v, i) => (
      <Label
        key={v}
        x={2972}
        y={ticksPriceY[i] - 0.5}
        width={61}
        fill={v > 25.25 ? RED : v < 25.25 ? GREEN : INK}
      >
        {v.toFixed(2)}
      </Label>
    ))}
    {ticksVolume.map((v, i) => (
      <Label key={v} x={2969} y={ticksVolumeY[i] + 1.5} fill="#555555">
        {v}
      </Label>
    ))}
  </MiniCanvas>
)

const LampGrid = () => (
  <svg width="206" height="30" viewBox="0 0 206 30">
    <g fill="#fafafa">
      <rect x="0" y="2" width="98" height="14" />
      <rect x="104" y="2" width="98" height="14" />
    </g>
    <g fill="#ececec">
      <rect x="1" y="3" width="22" height="12" />
      <rect x="76" y="3" width="21" height="12" />
      <rect x="106" y="3" width="22" height="12" />
      <rect x="180" y="3" width="21" height="12" />
    </g>
    <rect x="26" y="4" width="21" height="11" fill="#f00" />
    <rect x="48" y="4" width="19" height="11" fill="#007800" />
    <rect x="131" y="4" width="20" height="11" fill="#f00" />
    <rect x="153" y="4" width="14" height="11" fill="#007800" />
    <g stroke="#e61414" strokeWidth="4" strokeDasharray="13 7">
      <path d="M7 20 H102 M7 27 H102 M111 20 H205 M111 27 H205" />
    </g>
  </svg>
)

const ArrowTool = ({ turn }) => (
  <svg width="32" height="32" viewBox="0 0 32 32">
    <path
      d="M16 2 L27 13 H21 V30 H11 V13 H5 Z"
      fill="#fff"
      stroke="#3f78c8"
      strokeWidth="2"
      transform={`rotate(${turn} 16 16)`}
    />
  </svg>
)

const Rows = ({ colors, x, step, w }) =>
  colors.map((c, n) => (
    <g key={n} fill={c}>
      {[3, 7, 11, 15, 19].map(y => (
        <rect key={y} x={x + n * step} y={y} width={w} height="2" />
      ))}
    </g>
  ))

const Sketch = ({ children }) => (
  <svg width="28" height="26" viewBox="0 0 28 26">
    {children}
  </svg>
)

const upperTools = [
  <ArrowTool turn={-90} />,
  <ArrowTool turn={0} />,
  <ArrowTool turn={180} />,
  <Frame>
    <Sketch>
      <Rows colors={[`#148214`, `#c81e1e`]} x={2} step={13} w={9} />
      <circle cx="19" cy="19" r="6.5" fill="#eee" stroke="#808080" strokeWidth="2" />
      <path d="M16 19 l3 2 l4 -5" fill="none" stroke="#707070" strokeWidth="1.5" />
    </Sketch>
  </Frame>,
  <Frame>
    <Sketch>
      <Rows colors={[`#c81e1e`, `#148214`, `#1414b4`]} x={2} step={9} w={6} />
    </Sketch>
  </Frame>,
  <Frame>
    <Sketch>
      <path d="M1 19 L8 12 L13 16 L20 8 L27 6" fill="none" stroke="#c81e1e" strokeWidth="2" />
    </Sketch>
  </Frame>,
  <Frame>
    <Sketch>
      <path d="M6 6 V20 M22 1 V16" stroke="#e00" strokeWidth="2" />
      <path d="M14 4 V24" stroke="#148214" strokeWidth="2" />
      <rect x="3" y="9" width="6" height="8" fill="#f00" />
      <rect x="19" y="3" width="6" height="9" fill="#f00" />
      <rect x="11" y="8" width="6" height="11" fill="#148214" />
    </Sketch>
  </Frame>,
  <svg width="32" height="30" viewBox="0 0 32 30">
    <rect x="7" y="2" width="24" height="20" fill="#fff" stroke="#3f78c8" strokeWidth="2" />
    <rect x="1" y="8" width="24" height="20" fill="#fff" stroke="#3f78c8" strokeWidth="2" />
    <path d="M5 14 H12 M14 14 H21 M5 18 H12 M14 18 H21 M5 22 H12 M14 22 H21" stroke="#555" strokeWidth="2" />
  </svg>,
  <Frame $size={18} $tight>
    F10
  </Frame>,
  <Frame>
    <Sketch>
      <path d="M8 8 V20 H17 M8 12 H17" fill="none" stroke="#5a82d2" strokeWidth="2" />
      <g fill="#f0c832" stroke="#c89614" strokeWidth="1.5">
        <rect x="4" y="2" width="10" height="5" />
        <rect x="17" y="10" width="8" height="5" />
        <rect x="17" y="18" width="8" height="5" />
      </g>
    </Sketch>
  </Frame>,
  <Frame $size={21} $color="#f08246" $bold>
    自
  </Frame>,
  <Frame $size={18} $tight>
    F12
  </Frame>,
  <Frame $size={18} $round $italic>
    f(x)
  </Frame>,
  <Frame>
    <Sketch>
      <circle cx="14" cy="13" r="7" fill="none" stroke="#2878be" strokeWidth="2" />
    </Sketch>
  </Frame>,
]

const middleTools = [
  <Frame>
    <Sketch>
      <path d="M2 10 l4 -3 l4 3 l4 -3 l4 3 l4 -3 l4 -1" fill="none" stroke="#d23c3c" strokeWidth="2" />
      <path d="M2 20 l4 -3 l4 3 l4 -3 l4 3 l4 -3 l4 -1" fill="none" stroke="#3c3cd2" strokeWidth="2" />
    </Sketch>
  </Frame>,
  <Rsi>RSI</Rsi>,
  <svg width="26" height="32" viewBox="0 0 26 32">
    <path d="M21 12 C20 8 7 8 7 13 C7 18 20 16 20 22 C20 28 7 28 6 23" fill="none" stroke="#a0a0a0" strokeWidth="5" />
    <path d="M19 11 C18 7 5 7 5 12 C5 17 18 15 18 21 C18 27 5 27 4 22" fill="none" stroke="#c83232" strokeWidth="5" />
    <path d="M12 0 L17 7 H7 Z" fill="#c83232" />
  </svg>,
  <svg width="30" height="30" viewBox="0 0 30 30">
    <path d="M15 0 L21 7 H9 Z M15 30 L21 23 H9 Z M0 15 L7 9 V21 Z M30 15 L23 9 V21 Z" fill="#1450a0" />
    <path d="M15 7 V23 M7 15 H23" stroke="#1450a0" strokeWidth="6" />
    <circle cx="15" cy="15" r="3" fill="#5aa0e6" />
  </svg>,
  <svg width="30" height="30" viewBox="0 0 30 30">
    <path d="M3 28 L5 20 L20 5 L26 11 L11 25 Z" fill="#e6a028" stroke="#8c6428" strokeWidth="1.5" />
    <path d="M20 5 L24 1 Q29 3 29 7 L26 11 Z" fill="#e68c8c" stroke="#8c6464" strokeWidth="1" />
    <path d="M3 28 L4 24 L7 27 Z" fill="#333" />
  </svg>,
]

const lowerTools = [
  <Frame $size={20}>F5</Frame>,
  <Frame>
    <Sketch>
      <path d="M4 12 A9 8 0 0 1 20 6 L23 3 V12 H14 L17 9 A6 5 0 0 0 8 12 Z" fill="#5ac83c" />
      <path d="M24 14 A9 8 0 0 1 8 20 L5 23 V14 H14 L11 17 A6 5 0 0 0 20 14 Z" fill="#7ad25a" />
    </Sketch>
  </Frame>,
]

const cycles = [`1`, `5`, `15`, `30`, `60`, `日`, `周`, `月`, `N`, `多`, `季`, `年`]

const NumberRows = ({ rows }) =>
  rows.map(([a, b, tone, c, d, tone2, boxed, unit]) => (
    <NumberRow key={a}>
      <NumberLabel>{a}</NumberLabel>
      <NumberValue $tone={tone}>{b}</NumberValue>
      <NumberLabel $second>{c}</NumberLabel>
      <NumberValue $tone={tone2} $boxed={boxed} $last>
        {d}
        {unit && <Wan>{unit}</Wan>}
      </NumberValue>
    </NumberRow>
  ))

export default function App() {
  return (
    <Page>
      <GlobalStyle />
      <Desk>
        <Upper>
          <Workspace>
            <Studio>
              <SideTabs>
                {[
                  [`分时走势`, 116],
                  [`技术分析`, 121],
                  [`成交明细`, 120],
                  [`分价表`, 95],
                  [`基本资料`, 121],
                ].map(([name, height]) => (
                  <SideTab key={name} $height={height} $active={name === `技术分析`}>
                    {name.split(``).map(ch => (
                      <span key={ch}>{ch}</span>
                    ))}
                  </SideTab>
                ))}
                <SideTab $height={120} $mono>
                  {[`de`, `ep`, `se`, `ek`].map(ch => (
                    <span key={ch}>{ch}</span>
                  ))}
                </SideTab>
              </SideTabs>

              <Center>
                <TopBar>
                  <PanelToggle>
                    <SplitIcon />
                  </PanelToggle>
                  {periods.map(([name, width]) => (
                    <Period key={name} $width={width} $active={name === `日线`}>
                      {name}
                    </Period>
                  ))}
                  <Actions>
                    {actions.map(name => (
                      <Action key={name}>{name}</Action>
                    ))}
                  </Actions>
                </TopBar>

                <Board>
                  <Chart />
                  <Legend $row={1}>
                    <LegendLine $height={35} $indent={6}>
                      <StockName>澳弘电子(日线.前复权)</StockName>
                      <Caption $width={33}>
                        <Dropdown />
                      </Caption>
                      <Caption $width={84}>21看盘</Caption>
                      {averages.map(([name, width]) => (
                        <Reading key={name} $width={width}>
                          {name}
                          <Trend />
                        </Reading>
                      ))}
                      <LegendTail>
                        <svg width="22" height="22" viewBox="0 0 22 22">
                          <path d="M11 1 L20 11 L11 21 L2 11 Z" fill="none" stroke="#606060" strokeWidth="1.6" />
                        </svg>
                        <SplitIcon />
                      </LegendTail>
                    </LegendLine>
                    <LegendLine $height={43} $indent={15}>
                      <Sector $width={151}>所属板块：</Sector>
                      <Sector $width={240}>【行业】：元器件</Sector>
                      <Sector $width={264}>【地域】：江苏板块</Sector>
                      <Sector $width={640}>
                        【概念】：汽车电子 智能家居 工业互联 PCB概念 商业航天
                      </Sector>
                    </LegendLine>
                  </Legend>
                  <Legend $row={2}>
                    <LegendLine $height={34} $indent={4}>
                      <Caption $width={31}>
                        <Dropdown />
                      </Caption>
                      <Caption $width={196}>假阴线公式(5,10)</Caption>
                      <Reading $width={205} $color={INK}>
                        VVOL: 61725.32
                        <Trend />
                      </Reading>
                      <Reading $width={240} $color="#1478b4">
                        VOLUME: 61725.32
                        <Trend />
                      </Reading>
                    </LegendLine>
                  </Legend>
                  <Legend $row={3}>
                    <LegendLine $height={34} $indent={4}>
                      <Caption $width={35}>
                        <Dropdown />
                      </Caption>
                      <Caption $width={102}>上证对比</Caption>
                      <Reading $width={180}>
                        指数: 3424.23
                        <Trend down />
                      </Reading>
                      <Reading $width={160}>
                        涨跌: -31.74
                        <Trend down />
                      </Reading>
                      <Reading $width={180}>
                        涨跌幅: -0.92
                        <Trend down />
                      </Reading>
                    </LegendLine>
                  </Legend>
                </Board>

                <TabRow $height={34}>
                  {indicatorTabs.map(([name, width]) => (
                    <Tab
                      key={name}
                      $width={width}
                      $color={name === `上证对比` ? `#e01010` : name === `指标平台` ? `#606060` : INK}
                    >
                      {name}
                    </Tab>
                  ))}
                  <Spring />
                  <Tab $width={84}>指标B</Tab>
                  <Tab $width={83}>模 板</Tab>
                  <Tab $width={51}>+</Tab>
                  <Tab $width={52}>−</Tab>
                </TabRow>
              </Center>
            </Studio>

            <TabRow $height={37} $closed>
              <SwitchCell>
                <Switch>
                  <Knob />弹
                </Switch>
              </SwitchCell>
              <Tab $width={82}>扩展^</Tab>
              <Tab $width={112}>关联报价</Tab>
              <Tab $width={88} $color="#505050">
                财富圈
              </Tab>
              <Tab $width={112} $color="#e04040">
                增值功能
              </Tab>
              <Spring />
              <Tab $width={175}>普及版功能说明</Tab>
              <Tab $width={97} $color="#505050">
                图文F10
              </Tab>
              <Tab $width={102} $color="#505050">
                侧边栏 «
              </Tab>
            </TabRow>
          </Workspace>

          <Quote>
            <QuoteHead>
              <Ticker>605058</Ticker>
              澳弘电子
            </QuoteHead>
            <Seal>
              <Fold>
                <svg width="20" height="16" viewBox="0 0 20 16">
                  <path d="M1 9 L10 2 L19 9 M5 14 L10 9 L15 14" fill="none" stroke="#ee3c3c" strokeWidth="2.4" />
                </svg>
              </Fold>
              <Streak>首板</Streak>
              <SealList>
                <SealLine $color="#606060" $pinned>
                  <SealLabel>
                    <Pin />
                    当前封单额
                  </SealLabel>
                  <SealValue>6229万</SealValue>
                </SealLine>
                <SealLine>
                  <SealLabel>封单占成交</SealLabel>
                  <SealValue>0.36倍</SealValue>
                </SealLine>
                <SealLine $gap={13}>
                  <SealLabel>封单占流通Z</SealLabel>
                  <SealValue>5.22%</SealValue>
                </SealLine>
                <SealLine $color={RED}>
                  <SealLabel>十日总涨幅</SealLabel>
                  <SealValue>17.91%</SealValue>
                </SealLine>
              </SealList>
            </Seal>
            <Orders>
              {[
                [`27.78`, 218, `6228.6`],
                [`27.77`, 6, `14.2`],
                [`27.76`, 6, `1.1`],
                [`27.71`, 6, `2.8`],
                [`27.70`, 6, `2.8`],
              ].map(([price, bar, size]) => (
                <Order key={price}>
                  <OrderPrice $boxed={price === `27.76`}>{price}</OrderPrice>
                  <OrderBar style={{ width: bar }} />
                  <OrderSize>
                    {size}
                    <Wan>万</Wan>
                  </OrderSize>
                </Order>
              ))}
            </Orders>
            <Numbers $height={194}>
              <NumberRows rows={quotes} />
            </Numbers>
            <Numbers $height={122}>
              <NumberRows rows={facts} />
            </Numbers>
            <MiniTitle>
              <span>澳弘电子</span>
              <Industry>元器件</Industry>
            </MiniTitle>
            <MiniChart />
            <MiniTabs>
              {`笔价细势联值主筹`.split(``).map(ch => (
                <MiniTab key={ch} $active={ch === `势`}>
                  {ch}
                </MiniTab>
              ))}
            </MiniTabs>
          </Quote>
        </Upper>

        <Status>
          {indices.map(([text, width, tone]) => (
            <IndexCell key={text} $width={width} $tone={tone}>
              {text}
            </IndexCell>
          ))}
          <Lamps>
            <LampGrid />
          </Lamps>
          北京双线主站6
          <Tray>
            <svg width="28" height="26" viewBox="0 0 28 26">
              <rect x="1" y="1" width="26" height="24" fill="#fff" stroke="#606060" strokeWidth="2" />
              <rect x="1" y="1" width="26" height="5" fill="#909090" />
              <path d="M4 10 H24 M4 14 H24 M4 18 H24" stroke="#ccc" strokeWidth="1.5" />
            </svg>
            <svg width="24" height="24" viewBox="0 0 24 24">
              <rect x="1" y="1" width="22" height="22" rx="5" fill="#dcdc3c" stroke="#a0a014" strokeWidth="2" />
              <path d="M12 5 L18 11 H14 V19 H10 V11 H6 Z" fill="#96960a" />
            </svg>
            <svg width="24" height="26" viewBox="0 0 24 26">
              <path d="M3 2 L18 2 L23 15 Q14 22 4 12 Z M4 18 L9 26 H0 Z" fill="#757575" />
              <path d="M11 4 L17 3 L18 9 Z" fill="#efefef" />
            </svg>
            <svg width="16" height="26" viewBox="0 0 16 26">
              <path d="M8 0 L15 8 H1 Z" fill="#f00" />
              <path d="M8 9 L15 17 H1 Z" fill="#ff0" />
              <path d="M8 18 L15 26 H1 Z" fill="#008000" />
            </svg>
            <Pin />
          </Tray>
        </Status>
      </Desk>

      <Strip>
        {upperTools.map((icon, i) => (
          <Tool key={i}>{icon}</Tool>
        ))}
        <Rule $gap="6px 3px 8px" />
        {middleTools.map((icon, i) => (
          <Tool key={i}>{icon}</Tool>
        ))}
        <Rule $gap="6px 3px 9px" />
        {lowerTools.map((icon, i) => (
          <Tool key={i}>{icon}</Tool>
        ))}
        {cycles.map(name => (
          <Tool key={name} $pressed={name === `日`}>
            {name}
          </Tool>
        ))}
      </Strip>

      <Watermark>股海明灯</Watermark>
      <Pointer width="26" height="42" viewBox="0 0 26 42">
        <path
          d="M1 1 V34 L8 27 L14 40 L19 38 L14 25 H24 Z"
          fill="#fff"
          stroke="#222"
          strokeWidth="1.6"
        />
      </Pointer>
    </Page>
  )
}
